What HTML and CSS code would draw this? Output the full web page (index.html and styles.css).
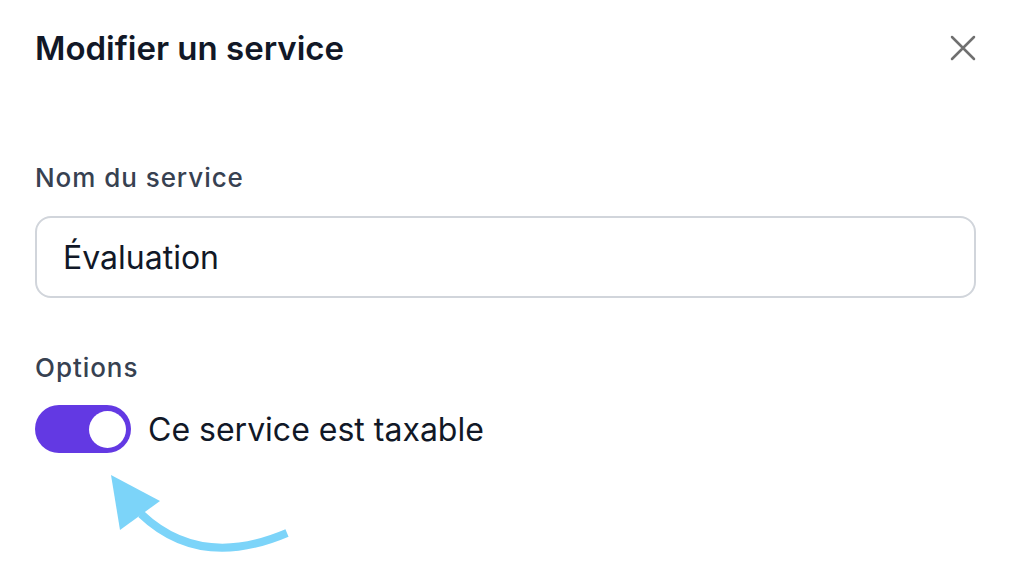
FILE: index.html
```html
<!DOCTYPE html>
<html lang="fr">
<head>
<meta charset="utf-8">
<link rel="stylesheet" href="styles.css">
</head>
<body>
<div class="modal">
  <header class="modal-header">
    <h1 class="title">Modifier un service</h1>
    <button class="close" aria-label="Fermer">
      <svg width="26" height="26" viewBox="0 0 26 26" fill="none" stroke="#707070" stroke-width="2.5" stroke-linecap="round">
        <path d="M2 2L24 24M24 2L2 24"/>
      </svg>
    </button>
  </header>
  <div class="field">
    <label class="label">Nom du service</label>
    <div class="input">Évaluation</div>
  </div>
  <div class="field options">
    <span class="label">Options</span>
    <div class="toggle-row">
      <span class="toggle"><span class="knob"></span></span>
      <span class="toggle-label">Ce service est taxable</span>
    </div>
  </div>
  <svg class="arrow" width="1012" height="570" viewBox="0 0 1012 570">
    <path d="M287 533 Q200 570 141 514" fill="none" stroke="#7cd4f9" stroke-width="8"/>
    <polygon points="111,475 120,530 160,501" fill="#7cd4f9"/>
  </svg>
</div>
</body>
</html>
```
FILE: styles.css
```css
* { box-sizing: border-box; }
html, body { margin: 0; padding: 0; background: #fff; }
body {
  width: 1012px;
  height: 570px;
  overflow: hidden;
  font-family: Inter, "Noto Sans", sans-serif;
}
.modal {
  position: relative;
  padding: 24px 36px 0 35px;
  display: flex;
  flex-direction: column;
}
.modal-header {
  display: flex;
  align-items: center;
  justify-content: space-between;
  height: 48px;
}
.title {
  margin: 0;
  font-size: 33px;
  font-weight: 600;
  color: #111827;
}
.close {
  border: 0;
  background: none;
  padding: 0;
  width: 26px;
  height: 26px;
  display: flex;
}
.field {
  display: flex;
  flex-direction: column;
}
.modal-header + .field { margin-top: 88px; }
.label {
  font-size: 26px;
  font-weight: 500;
  color: #374151;
  line-height: 36px;
  letter-spacing: 0.95px;
}
.input {
  margin-top: 20px;
  height: 82px;
  border: 2px solid #d1d5db;
  border-radius: 16px;
  padding: 0 26px;
  display: flex;
  align-items: center;
  font-size: 32px;
  color: #111827;
}
.options { margin-top: 52px; }
.toggle-row {
  margin-top: 19px;
  display: flex;
  align-items: center;
  gap: 17px;
}
.toggle {
  width: 96px;
  height: 48px;
  border-radius: 24px;
  background: #6339e3;
  display: flex;
  align-items: center;
  justify-content: flex-end;
  padding-right: 5px;
}
.knob {
  width: 37px;
  height: 37px;
  border-radius: 50%;
  background: #fff;
}
.toggle-label {
  font-size: 32px;
  color: #111827;
}
.arrow {
  position: absolute;
  left: 0;
  top: 0;
  pointer-events: none;
}
```
